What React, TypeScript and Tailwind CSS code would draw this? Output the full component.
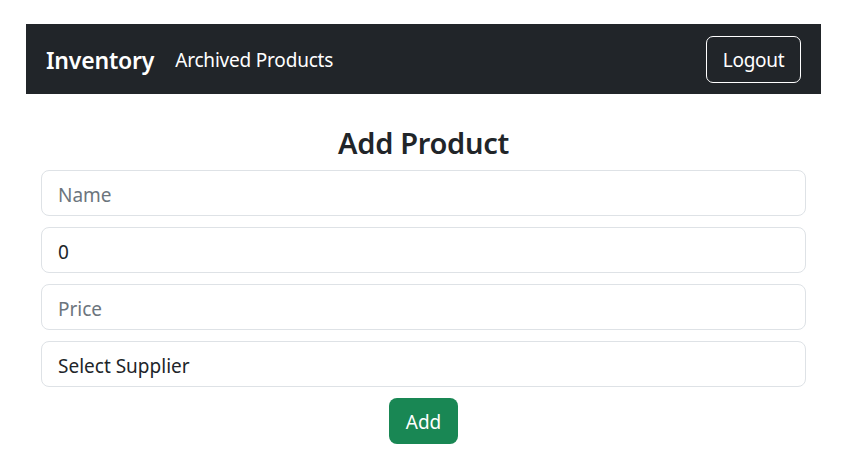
import { useState } from "react";

const font = { fontFamily: '"Segoe UI", "Noto Sans", sans-serif' };

export default function App() {
  const [qty, setQty] = useState("0");

  return (
    <div className="min-h-[460px] bg-white pt-6 pl-[26px] pr-[32px] text-[#212529]" style={font}>
      {/* Navbar */}
      <nav className="h-[70px] bg-[#212529] flex items-center justify-between pl-5 pr-5">
        <div className="flex items-center">
          <span className="text-[23px] font-semibold text-white tracking-[-0.2px] pt-[2px]">Inventory</span>
          <a className="ml-[21px] text-[19px] text-white tracking-[-0.2px] pt-[2px]">Archived Products</a>
        </div>
        <button className="h-[47px] w-[95px] rounded-[7px] border border-white text-white text-[19px] tracking-[-0.3px] pt-[2px]">
          Logout
        </button>
      </nav>

      {/* Form */}
      <div className="px-[15px]">
        <h2 className="mt-[31px] text-center text-[29px] font-semibold leading-[36px] tracking-[-0.3px]">
          Add Product
        </h2>
        <form className="mt-[9px] flex flex-col gap-[11px]">
          <input
            placeholder="Name"
            className="h-[46px] w-full rounded-[8px] border border-[#dee2e6] px-4 pt-[4px] text-[19px] placeholder:text-[#6c757d] outline-none"
          />
          <input
            value={qty}
            onChange={(e) => setQty(e.target.value)}
            className="h-[46px] w-full rounded-[8px] border border-[#dee2e6] px-4 pt-[4px] text-[19px] text-[#212529] outline-none"
          />
          <input
            placeholder="Price"
            className="h-[46px] w-full rounded-[8px] border border-[#dee2e6] px-4 pt-[4px] text-[19px] placeholder:text-[#6c757d] outline-none"
          />
          <div className="h-[46px] w-full rounded-[8px] border border-[#dee2e6] px-4 pt-[4px] flex items-center text-[19px] text-[#212529]">
            Select Supplier
          </div>
          <div className="flex justify-center">
            <button
              type="button"
              className="h-[46px] w-[69px] rounded-[8px] bg-[#198754] text-white text-[19px] pt-[3px]"
            >
              Add
            </button>
          </div>
        </form>
      </div>
    </div>
  );
}
